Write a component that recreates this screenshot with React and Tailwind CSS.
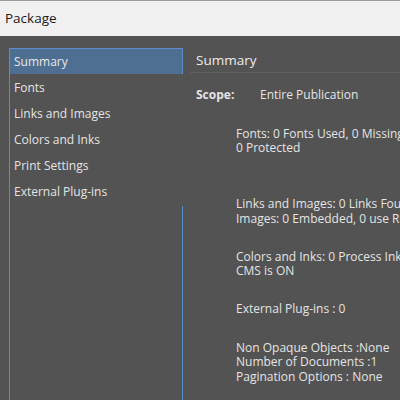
import React from 'react';

const sections = ['Summary', 'Fonts', 'Links and Images', 'Colors and Inks', 'Print Settings', 'External Plug-ins'];

const App = () => {
  return (
    <div className="w-[400px] h-[400px] overflow-hidden flex flex-col bg-[#535353] font-['Open_Sans',sans-serif]">
      {/* title bar */}
      <div className="h-[36px] shrink-0 bg-[#f0f0f0] border-t border-[#9a9a9a] flex items-center pl-[5px]">
        <span className="text-[13.5px] text-[#1a1a1a]">Package</span>
      </div>

      <div className="flex-1 flex pt-[12px] min-h-0">
        {/* section list */}
        <div className="w-[174px] shrink-0 ml-[9px] flex flex-col border-l border-t border-[#5b8ccb] relative">
          {sections.map((s, i) => (
            <div
              key={s}
              className={
                i === 0
                  ? 'h-[25px] pt-[1px] flex items-center pl-[4px] text-[12px] text-[#e8e8e8] bg-[#4e6e92] whitespace-nowrap'
                  : 'h-[26px] pt-[2px] flex items-center pl-[4px] text-[12px] text-[#e4e4e4] whitespace-nowrap'
              }
            >
              {s}
            </div>
          ))}
          <div className="absolute right-0 top-[157px] bottom-0 w-px bg-[#5b8ccb]" />
          <div className="absolute right-0 top-0 h-[25px] w-px bg-[#5b8ccb]" />
        </div>

        {/* details */}
        <div className="flex-1 min-w-0 overflow-hidden ml-[7px] flex flex-col text-[12px] text-[#e4e4e4]">
          <div className="h-[25px] shrink-0 flex items-center pl-[6px] pt-[1px] border-b border-[#606060] text-[13.5px] text-[#ececec]">
            Summary
          </div>
          <div className="flex items-center mt-[15px] pl-[6px] leading-[14px]">
            <span className="w-[64px] font-bold">Scope:</span>
            <span>Entire Publication</span>
          </div>
          <div className="pl-[46px] whitespace-nowrap leading-[14px]">
            <div className="mt-[25px]">Fonts: 0 Fonts Used, 0 Missing, 0 Embedded</div>
            <div>0 Protected</div>
            <div className="mt-[41px] leading-[15px]">Links and Images: 0 Links Found; 0 Modified</div>
            <div className="leading-[15px]">Images: 0 Embedded, 0 use RGB color space</div>
            <div className="mt-[24px]">Colors and Inks: 0 Process Inks; 0 Spot Inks</div>
            <div>CMS is ON</div>
            <div className="mt-[24px]">External Plug-ins : 0</div>
            <div className="mt-[25px]">Non Opaque Objects :None</div>
            <div>Number of Documents :1</div>
            <div className="pt-[1px]">Pagination Options : None</div>
          </div>
          <div className="flex items-center mt-[15px] pl-[6px] gap-[8px] shrink-0">
            <div className="w-[13px] h-[13px] bg-[#6a6a6a] border border-[#7a7a7a]" />
            <span className="whitespace-nowrap">Notify printer</span>
          </div>
        </div>
      </div>
    </div>
  );
};

export default App;
